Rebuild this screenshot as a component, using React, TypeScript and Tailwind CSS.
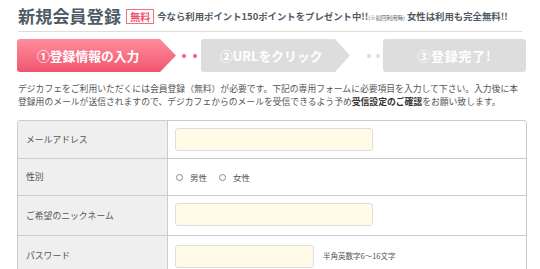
import React from 'react';

const steps = [
  { label: '①登録情報の入力', active: true },
  { label: '②URLをクリック', active: false },
  { label: '③登録完了!', active: false },
];

const Dots: React.FC<{ active: boolean }> = ({ active }) => (
  <div className={active ? 'flex items-center gap-[7px] ml-[6px] mr-[4px]' : 'flex items-center gap-[5px] ml-[17px] mr-[3px]'}>
    <span className={active ? 'w-[4px] h-[4px] rounded-full bg-[#f5607a]' : 'w-[4px] h-[4px] rounded-full bg-[#dcdcdc]'} />
    <span className={active ? 'w-[4px] h-[4px] rounded-full bg-[#f5607a]' : 'w-[4px] h-[4px] rounded-full bg-[#dcdcdc]'} />
  </div>
);

const TextInput: React.FC<{ width: string }> = ({ width }) => (
  <input
    type="text"
    className={`${width} h-[23px] bg-[#fffbe6] border border-[#dedede] rounded-[3px] outline-none`}
  />
);

const App: React.FC = () => {
  return (
    <div className="w-[540px] h-[269px] overflow-hidden bg-white font-['Noto_Sans_CJK_JP',sans-serif] text-[#555]">
      {/* Header */}
      <div className="mx-[18px] pt-[5px] pb-[4px] border-b border-[#dddddd] flex items-center">
        <h1 className="text-[17px] font-bold text-[#4f5a64] leading-[22px] tracking-[0.2px]">新規会員登録</h1>
        <span className="ml-[5px] border-[1.5px] border-[#f26f86] text-[#f0506c] text-[10px] font-bold leading-[11px] px-[3px] py-[1px]">
          無料
        </span>
        <span className="ml-[3px] text-[9.4px] font-bold text-[#4f5a64] whitespace-nowrap">
          今なら利用ポイント150ポイントをプレゼント中!!
          <span className="text-[5.5px] font-normal">(※初回利用時)</span>
          <span className="ml-[2px]">女性は利用も完全無料!!</span>
        </span>
      </div>

      {/* Steps */}
      <div className="mt-[7px] ml-[17px] flex items-center h-[33px]">
        <div className="w-[159px] h-full rounded-l-[3px] bg-gradient-to-b from-[#ff8d9e] to-[#f0546e] [clip-path:polygon(0_0,143px_0,159px_50%,143px_100%,0_100%)] flex items-center pl-[20px]">
          <span className="text-white text-[12.8px] font-bold">{steps[0].label}</span>
        </div>
        <Dots active />
        <div className="w-[149px] h-full rounded-l-[3px] bg-[#dddddd] [clip-path:polygon(0_0,134px_0,149px_50%,134px_100%,0_100%)] flex items-center pl-[19px]">
          <span className="text-white text-[12.8px] font-bold">{steps[1].label}</span>
        </div>
        <Dots active={false} />
        <div className="w-[143px] h-full rounded-[3px] bg-[#dddddd] flex items-center justify-center">
          <span className="text-white text-[12.8px] font-bold tracking-[1px]">{steps[2].label}</span>
        </div>
      </div>

      {/* Intro */}
      <p className="mx-[18px] mt-[10px] text-[8.8px] leading-[13px] whitespace-nowrap">
        デジカフェをご利用いただくには会員登録（無料）が必要です。下記の専用フォームに必要項目を入力して下さい。入力後に本
        <br />
        登録用のメールが送信されますので、デジカフェからのメールを受信できるよう予め
        <strong className="font-bold text-[#333]">受信設定のご確認</strong>
        をお願い致します。
      </p>

      {/* Form table */}
      <div className="mx-[17px] mt-[12px] w-[510px] border border-[#cccccc] rounded-t-[3px] overflow-hidden text-[8.8px]">
        <div className="flex h-[38px] border-b border-[#cccccc]">
          <div className="w-[150px] bg-[#efefef] border-r border-[#cccccc] flex items-center pl-[8px]">メールアドレス</div>
          <div className="flex-1 flex items-center pl-[7px]">
            <TextInput width="w-[198px]" />
          </div>
        </div>
        <div className="flex h-[37px] border-b border-[#cccccc]">
          <div className="w-[150px] bg-[#efefef] border-r border-[#cccccc] flex items-center pl-[8px]">性別</div>
          <div className="flex-1 flex items-center pl-[8px] gap-[12px] text-[8.5px]">
            <label className="flex items-center gap-[7px]">
              <span className="w-[7px] h-[7px] rounded-full border border-[#888]" />
              男性
            </label>
            <label className="flex items-center gap-[7px]">
              <span className="w-[7px] h-[7px] rounded-full border border-[#888]" />
              女性
            </label>
          </div>
        </div>
        <div className="flex h-[40px] border-b border-[#cccccc]">
          <div className="w-[150px] bg-[#efefef] border-r border-[#cccccc] flex items-center pl-[8px]">ご希望のニックネーム</div>
          <div className="flex-1 flex items-center pl-[7px] pb-[2px]">
            <TextInput width="w-[198px]" />
          </div>
        </div>
        <div className="flex h-[40px]">
          <div className="w-[150px] bg-[#efefef] border-r border-[#cccccc] flex items-center pl-[8px]">パスワード</div>
          <div className="flex-1 flex items-center pl-[7px]">
            <TextInput width="w-[139px]" />
            <span className="ml-[9px] text-[7.5px]">半角英数字6～16文字</span>
          </div>
        </div>
      </div>
    </div>
  );
};

export default App;
